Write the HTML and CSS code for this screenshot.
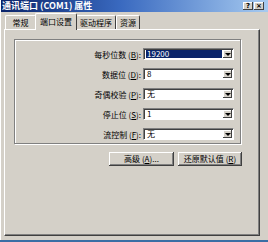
FILE: index.html
```html
<!DOCTYPE html>
<html>
    <head>
        <title>通讯端口 (COM1) 属性</title>
        <link rel="stylesheet" href="styles.css">
    </head>
    <body>
        <div class="window">
            <div class="titlebar">
                <span class="title">通讯端口 (COM1) 属性</span>
                <span class="tbtns">
                    <span class="tbtn">?</span>
                    <span class="tbtn">×</span>
                </span>
            </div>

            <div class="tabs">
                <span class="tab first">常规</span>
                <span class="tab active">端口设置</span>
                <span class="tab">驱动程序</span>
                <span class="tab">资源</span>
            </div>

            <div class="panel">
                <div class="group">
                    <div class="row">
                        <label>每秒位数 (<u>B</u>):</label>
                        <div class="combo focus"><span class="val">19200</span><span class="drop"></span></div>
                    </div>
                    <div class="row">
                        <label>数据位 (<u>D</u>):</label>
                        <div class="combo"><span class="val">8</span><span class="drop"></span></div>
                    </div>
                    <div class="row">
                        <label>奇偶校验 (<u>P</u>):</label>
                        <div class="combo"><span class="val">无</span><span class="drop"></span></div>
                    </div>
                    <div class="row">
                        <label>停止位 (<u>S</u>):</label>
                        <div class="combo"><span class="val">1</span><span class="drop"></span></div>
                    </div>
                    <div class="row">
                        <label>流控制 (<u>F</u>):</label>
                        <div class="combo"><span class="val">无</span><span class="drop"></span></div>
                    </div>
                </div>

                <div class="actions">
                    <button class="btn">高级 (<u>A</u>)...</button>
                    <button class="btn">还原默认值 (<u>R</u>)</button>
                </div>
            </div>
        </div>
        <div class="taskbar"></div>
    </body>
</html>
```

FILE: styles.css
```css
body{
    margin: 0;
    width: 268px;
    height: 242px;
    overflow: hidden;
    background-color: #d4d0c8;
    font-family: "Noto Sans CJK SC", "DejaVu Sans", sans-serif;
    font-size: 8px;
    color: #000;
}
.window{
    height: 240px;
    border-left: 1px solid #fff;
    box-sizing: border-box;
}
.titlebar{
    height: 12px;
    display: flex;
    align-items: center;
    justify-content: space-between;
    padding: 0 4px 0 1px;
    background: linear-gradient(to right, #0a246a, #3a6ac0 45%, #a6caf0);
    color: #fff;
    font-weight: bold;
    font-size: 9px;
    line-height: 12px;
}
.tbtns{
    display: flex;
    gap: 1px;
}
.tbtn{
    width: 10px;
    height: 8px;
    background-color: #d4d0c8;
    color: #000;
    font-family: "DejaVu Sans", sans-serif;
    font-size: 7px;
    line-height: 8px;
    text-align: center;
    box-shadow: inset -1px -1px #404040, inset 1px 1px #fff;
}
.tabs{
    display: flex;
    align-items: flex-end;
    height: 17px;
    padding-left: 4px;
    box-sizing: border-box;
}
.tab{
    height: 14px;
    line-height: 13px;
    padding: 0 3px;
    border-top: 1px solid #fff;
    border-left: 1px solid #fff;
    border-right: 1px solid #404040;
    border-radius: 2px 2px 0 0;
    box-sizing: border-box;
}
.tab.first{
    width: 31px;
    text-align: center;
}
.tab.active{
    height: 17px;
    margin: 0 -1px -1px -1px;
    padding: 0 4px;
    line-height: 15px;
    background-color: #d4d0c8;
    position: relative;
    z-index: 1;
}
.panel{
    width: 256px;
    height: 207px;
    margin-left: 3px;
    padding: 9px 18px 0 9px;
    box-sizing: border-box;
    border-top: 1px solid #fff;
    border-left: 1px solid #fff;
    border-right: 1px solid #404040;
    border-bottom: 1px solid #404040;
    box-shadow: inset -1px -1px #808080;
}
.group{
    height: 105px;
    padding-top: 4px;
    box-sizing: border-box;
    border: 1px solid #808080;
    box-shadow: 1px 1px 0 #fff, inset 1px 1px 0 #fff;
}
.row{
    display: grid;
    grid-template-columns: 126px 91px;
    column-gap: 2px;
    align-items: center;
    height: 20px;
}
.row label{
    text-align: right;
    white-space: nowrap;
}
.combo{
    height: 12px;
    display: flex;
    align-items: stretch;
    padding: 1px 1px 1px 2px;
    box-sizing: border-box;
    background-color: #fff;
    border-top: 1px solid #808080;
    border-left: 1px solid #808080;
    border-right: 1px solid #fff;
    border-bottom: 1px solid #fff;
    box-shadow: inset 1px 1px #404040;
}
.val{
    flex: 1;
    font-size: 8px;
    line-height: 8px;
    padding-left: 1px;
    white-space: nowrap;
}
.combo.focus .val{
    background-color: #0a246a;
    color: #fff;
}
.drop{
    width: 9px;
    margin-left: 1px;
    background-color: #d4d0c8;
    box-shadow: inset -1px -1px #404040, inset 1px 1px #fff;
    display: flex;
    align-items: center;
    justify-content: center;
}
.drop::after{
    content: "";
    border-left: 3px solid transparent;
    border-right: 3px solid transparent;
    border-top: 3px solid #000;
}
.actions{
    display: flex;
    justify-content: flex-end;
    gap: 4px;
    margin-top: 8px;
    margin-right: -1px;
}
.btn{
    height: 14px;
    padding: 0;
    background-color: #d4d0c8;
    border: none;
    font-family: inherit;
    font-size: 8px;
    line-height: 14px;
    color: #000;
    box-shadow: inset -1px -1px #404040, inset 1px 1px #fff, inset -2px -2px #808080;
}
.btn:first-child{
    width: 65px;
}
.btn:last-child{
    width: 64px;
}
.taskbar{
    height: 2px;
    background-color: #3a6ea5;
}
```
